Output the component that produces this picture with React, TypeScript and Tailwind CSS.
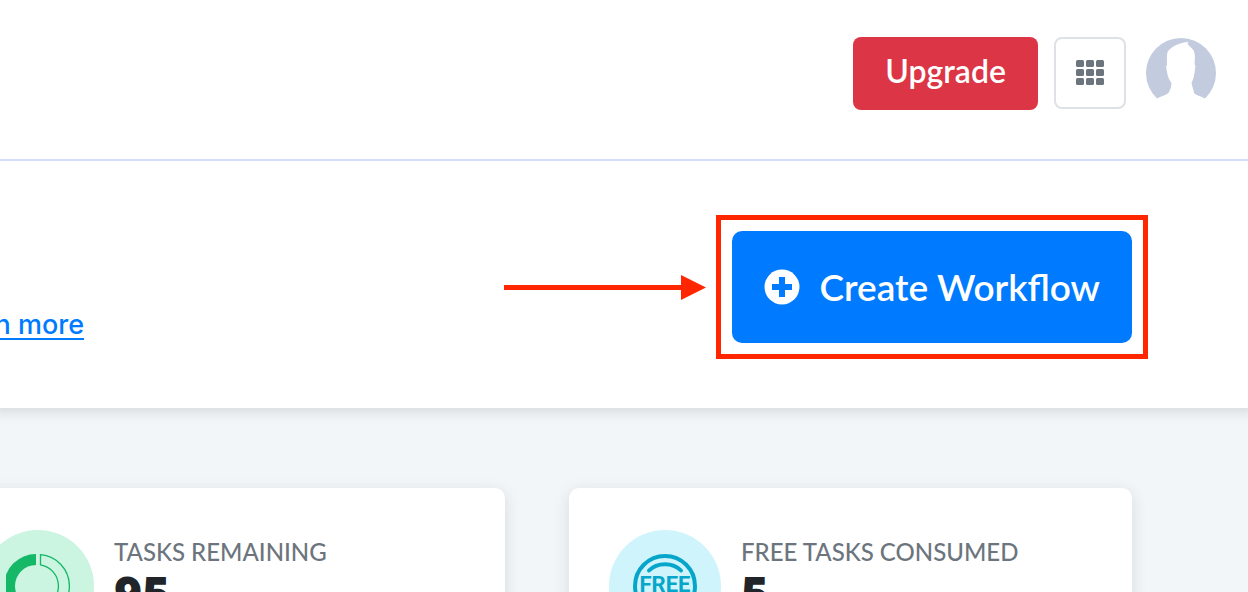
import type { ReactNode } from 'react';

interface StatCardProps {
  label: string;
  value: number;
  iconClassName: string;
  icon: ReactNode;
}

function StatCard({ label, value, iconClassName, icon }: StatCardProps) {
  return (
    <article className="flex items-start gap-5 rounded-[10px] bg-white px-10 pt-[42px] pb-10 shadow-[0_4px_16px_rgba(33,37,41,0.13)]">
      <div className={`flex size-28 shrink-0 items-center justify-center rounded-full ${iconClassName}`}>
        {icon}
      </div>
      <div className="whitespace-nowrap pt-2">
        <h2 className="text-[24px] leading-[28px] font-medium text-[#6c757d] uppercase">{label}</h2>
        <p className="font-['Open_Sans',sans-serif] text-[48px] leading-[54px] font-extrabold text-[#212529]">
          {value}
        </p>
      </div>
    </article>
  );
}

function AppsIcon() {
  return (
    <svg width="28" height="26" viewBox="0 0 28 26" fill="#6c757d" aria-hidden="true">
      {[0, 9, 18].map((y) =>
        [0, 10, 20].map((x) => <rect key={`${x}-${y}`} x={x} y={y} width="8" height="7" rx="1.5" />)
      )}
    </svg>
  );
}

function AvatarIcon() {
  return (
    <svg className="size-[70px]" viewBox="0 0 70 70" aria-hidden="true">
      <path
        fill="#c3cbdf"
        d="M11 60.500A35 35 0 1 1 59 60.500C55 58 50 57.500 48 55C47.500 51 46 48 45.500 45C48.500 39 48.500 34 49.500 27.500L48.500 26.500C49 20 49.500 14 46.500 11L41.500 6L42.500 4C34 4.500 24 9 21.500 14C20.500 18 21 23 21 27L20 28C21 34 21.500 40 25.500 45C25.500 49 24 52 22.500 55C19 57.500 14 58.500 11 60.500Z"
      />
    </svg>
  );
}

function PlusCircleIcon() {
  return (
    <svg className="size-9 shrink-0" viewBox="0 0 36 36" aria-hidden="true">
      <circle cx="18" cy="18" r="17.500" fill="#fff" />
      <path d="M15 8h6v7h7v6h-7v7h-6v-7H8v-6h7z" fill="#007bff" />
    </svg>
  );
}

function RemainingIcon() {
  return (
    <svg width="64" height="64" viewBox="0 0 64 64" aria-hidden="true">
      <path d="M30 0A32 32 0 0 0 30 64V53A21 21 0 0 1 30 11Z" fill="#14b866" />
      <path
        d="M34.500 .700A31.400 31.400 0 0 1 34.500 63.300V53.200A21.500 21.500 0 0 0 34.500 10.800Z"
        fill="none"
        stroke="#14b866"
        strokeWidth="1.300"
      />
    </svg>
  );
}

function FreeIcon() {
  return (
    <svg width="64" height="64" viewBox="0 0 64 64" aria-hidden="true">
      <circle cx="32" cy="32" r="30" fill="none" stroke="#06a6cb" strokeWidth="4" />
      <path d="M16 16.500C24 8 40 8 48 16.500" fill="none" stroke="#06a6cb" strokeWidth="4" strokeLinecap="round" />
      <text
        x="32"
        y="38"
        textAnchor="middle"
        fill="#06a6cb"
        className="font-['Roboto',sans-serif] text-[22px] font-bold"
      >
        FREE
      </text>
    </svg>
  );
}

export default function App() {
  return (
    <div className="h-screen overflow-hidden bg-[#f2f6f9] font-['Lato',sans-serif]">
      <header className="relative z-10 flex items-start justify-end border-b-2 border-[#d3defc] bg-white pt-[37px] pr-8 pb-[49px]">
        <button
          type="button"
          className="mr-4 rounded-lg bg-[#dc3545] px-8 pt-4 pb-[21px] text-[32px] leading-[36px] font-semibold text-white"
        >
          Upgrade
        </button>
        <button
          type="button"
          aria-label="Apps"
          className="mr-5 flex size-18 items-center justify-center rounded-lg border-2 border-[#dee2e6] bg-white"
        >
          <AppsIcon />
        </button>
        <button type="button" aria-label="Account" className="mt-px">
          <AvatarIcon />
        </button>
      </header>

      <section className="flex items-center justify-between bg-white pt-[70px] pr-[116px] pb-[65px] shadow-[0_-4px_12px_8px_rgba(33,37,41,0.13)]">
        <div className="flex w-[84px] justify-end pt-[76px] whitespace-nowrap">
          <a
            href="#learn-more"
            className="font-['Inter',sans-serif] text-[27px] leading-[36px] font-medium text-[#007bff] underline decoration-2 underline-offset-4"
          >
            Learn more
          </a>
        </div>

        <div className="relative">
          <button
            type="button"
            className="flex h-28 items-center gap-5 rounded-[10px] bg-[#007bff] px-8 text-[37px] leading-[48px] font-semibold text-white"
          >
            <PlusCircleIcon />
            Create Workflow
          </button>
          {/* Callout frame and arrow */}
          <div className="pointer-events-none absolute -inset-4 border-5 border-[#ff2600]" />
          <svg
            className="pointer-events-none absolute top-11 right-full mr-[26px]"
            width="202"
            height="25"
            viewBox="0 0 202 25"
            fill="#ff2600"
            aria-hidden="true"
          >
            <path d="M0 10H177V0L202 12.500L177 25V15H0Z" />
          </svg>
        </div>
      </section>

      <main className="mt-20 mr-[116px] -ml-[58px] grid grid-cols-2 gap-16">
        <StatCard label="Tasks remaining" value={95} iconClassName="bg-[#cbf4e1]" icon={<RemainingIcon />} />
        <StatCard label="Free tasks consumed" value={5} iconClassName="bg-[#cff4fc]" icon={<FreeIcon />} />
      </main>
    </div>
  );
}
